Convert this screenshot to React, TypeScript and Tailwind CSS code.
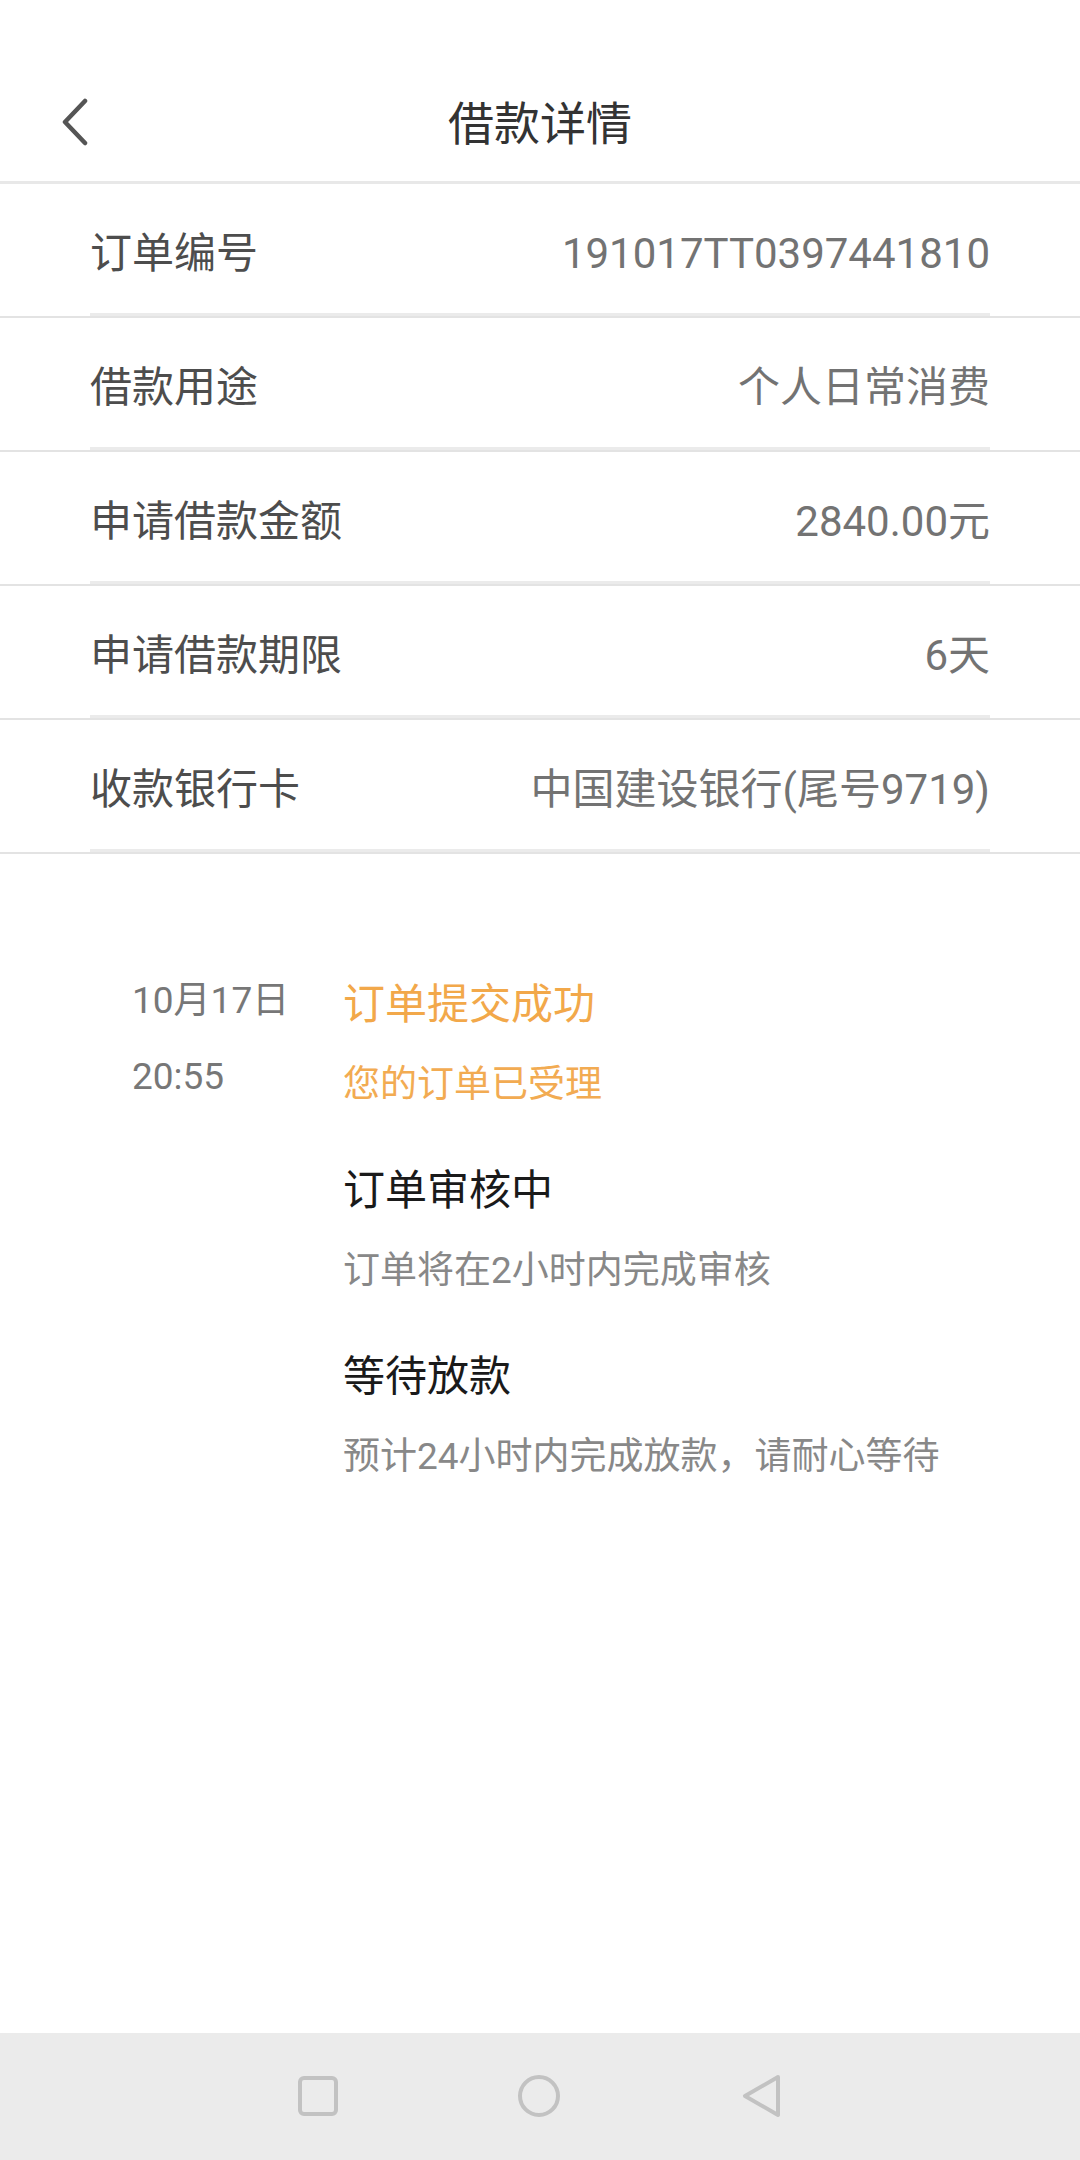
import React from 'react';

const font = { fontFamily: 'Roboto, "Noto Sans CJK SC", sans-serif' };

const rows: { label: string; value: string }[] = [
  { label: '订单编号', value: '191017TT0397441810' },
  { label: '借款用途', value: '个人日常消费' },
  { label: '申请借款金额', value: '2840.00元' },
  { label: '申请借款期限', value: '6天' },
  { label: '收款银行卡', value: '中国建设银行(尾号9719)' },
];

const steps = [
  { title: '订单审核中', desc: '订单将在2小时内完成审核' },
  { title: '等待放款', desc: '预计24小时内完成放款，请耐心等待' },
];

const DetailRow: React.FC<{ label: string; value: string }> = ({ label, value }) => (
  <div>
    <div className="flex h-[129px] items-center justify-between px-[90px] pt-[10px]">
      <span className="text-[42px] text-[#4d4d4d]">{label}</span>
      <span className="text-[42px] text-[#737373]">{value}</span>
    </div>
    <div className="mx-[90px] h-[3px] bg-[#ebebeb]" />
    <div className="h-[2px] bg-[#e3e3e3]" />
  </div>
);

export default function App() {
  return (
    <div className="flex h-[2160px] w-[1080px] flex-col bg-white" style={font}>
      <header className="relative flex h-[181px] items-center justify-center pt-[66px]">
        <button className="absolute left-[58px] top-[97px] flex h-[50px] w-[34px] items-center justify-center" aria-label="返回">
          <svg width="30" height="48" viewBox="0 0 30 48" fill="none">
            <path d="M25 3 L5 24 L25 45" stroke="#555555" strokeWidth="4.5" strokeLinecap="round" strokeLinejoin="round" />
          </svg>
        </button>
        <h1 className="text-[46px] leading-none text-[#333333]">借款详情</h1>
      </header>
      <div className="h-[3px] bg-[#e8e8e8]" />

      {rows.map(row => (
        <DetailRow key={row.label} label={row.label} value={row.value} />
      ))}

      <section className="mt-[111px] flex pl-[132px]">
        <div className="w-[211px] text-[37px] text-[#777777]">
          <div className="h-[80px] leading-[72px]">10月17日</div>
          <div className="h-[80px] leading-[64px]">20:55</div>
        </div>
        <div className="flex flex-col">
          <div className="h-[80px] text-[42px] leading-[80px] text-[#f2a84a]">订单提交成功</div>
          <div className="h-[80px] text-[37px] leading-[80px] text-[#f2ab52]">您的订单已受理</div>
          {steps.map(step => (
            <div key={step.title} className="mt-[26px]">
              <div className="h-[80px] text-[42px] leading-[80px] text-[#1a1a1a]">{step.title}</div>
              <div className="h-[80px] text-[37px] leading-[80px] text-[#888888]">{step.desc}</div>
            </div>
          ))}
        </div>
      </section>

      <div className="flex-1" />

      <nav className="flex h-[127px] items-center bg-[#ebebeb] pb-[2px]">
        <div className="ml-[297px] flex h-[42px] w-[42px] items-center justify-center">
          <div className="h-[40px] w-[40px] rounded-[6px] border-[4px] border-[#c2c2c2]" />
        </div>
        <div className="ml-[178px] flex h-[44px] w-[44px] items-center justify-center">
          <div className="h-[42px] w-[42px] rounded-full border-[4px] border-[#c2c2c2]" />
        </div>
        <div className="ml-[178px] flex h-[44px] w-[44px] items-center justify-center">
          <svg width="42" height="44" viewBox="0 0 42 44" fill="none">
            <path d="M38 3 L5 22 L38 41 Z" stroke="#c2c2c2" strokeWidth="4" strokeLinejoin="round" />
          </svg>
        </div>
      </nav>
    </div>
  );
}
